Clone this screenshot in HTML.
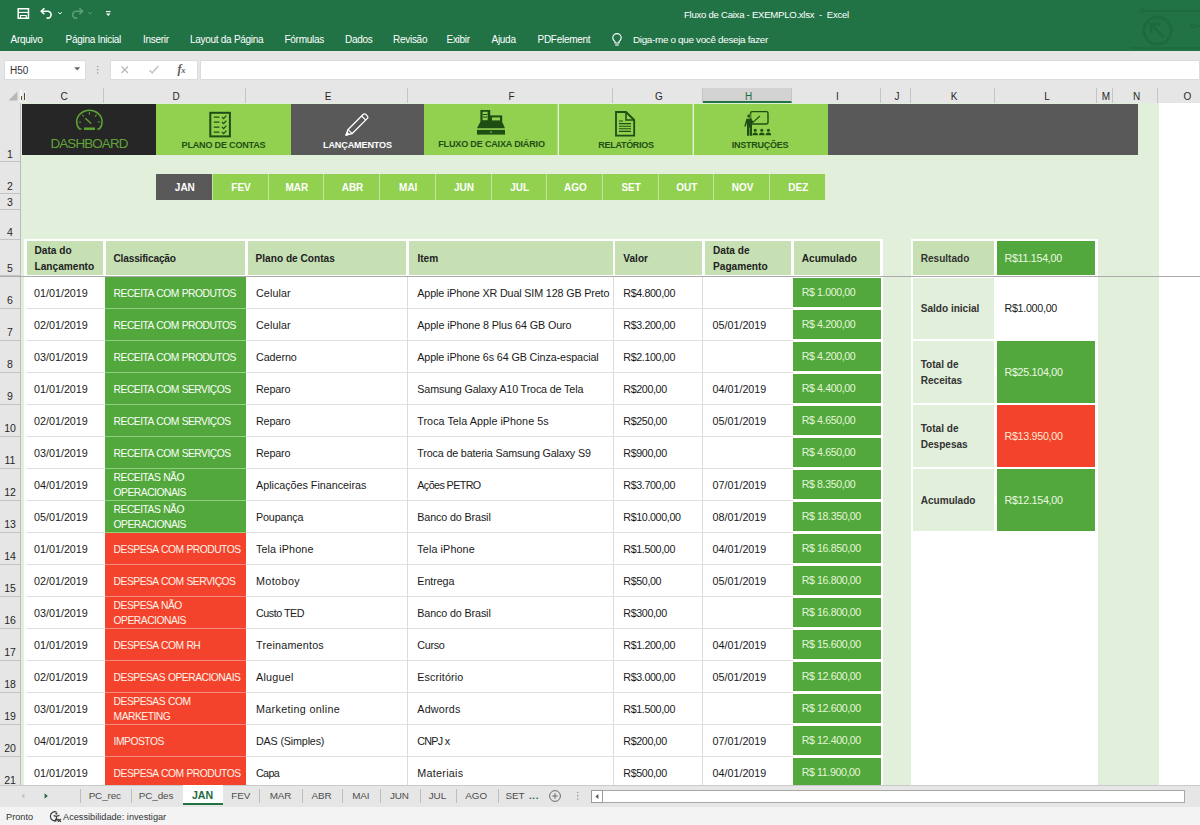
<!DOCTYPE html>
<html lang="pt-BR"><head><meta charset="utf-8"><title>Fluxo de Caixa - EXEMPLO.xlsx - Excel</title>
<style>
*{box-sizing:border-box;margin:0;padding:0}
html,body{width:1200px;height:825px;overflow:hidden;background:#fff}
body{font-family:"Liberation Sans",sans-serif;position:relative;color:#1a1a1a}
.a{position:absolute}
.t{position:absolute;white-space:nowrap;line-height:1}
#title{left:0;top:0;width:1200px;height:51px;background:#217346}
#title .m{position:absolute;top:34px;color:#fff;font-size:10px;letter-spacing:-.28px;line-height:11px;white-space:nowrap}
#fbar{left:0;top:51px;width:1200px;height:37px;background:#e6e6e6}
#fbar .w{position:absolute;top:8.5px;height:20px;background:#fff;border:1px solid #dcdcdc}
#chdr{left:0;top:88px;width:1200px;height:15px;background:#e6e6e6}
#chdr .c{position:absolute;top:0;height:15px;text-align:center;padding-left:3px;font-size:10px;line-height:17px;color:#262626;border-right:1px solid #c4c4c4}
#rhdr{left:0;top:103px;width:21px;height:682px;background:#e6e6e6;border-right:1px solid #bcbcbc;overflow:hidden}
#rhdr .r{position:absolute;left:0;width:20px;text-align:center;font-size:10.5px;color:#262626;border-bottom:1px solid #c4c4c4}
#rhdr .r span{position:absolute;left:0;width:20px;bottom:1.6px;line-height:1}
#sheet{left:21px;top:103px;width:1179px;height:682px;background:#fff;overflow:hidden;padding:0}
#sheet>.o{position:absolute;left:1px;top:0;width:1178px;height:682px}
.ban{position:absolute;top:1px;height:51px}
.ban .l{position:absolute;left:0;width:100%;text-align:center;font-weight:700;white-space:nowrap;line-height:1}
.mt{position:absolute;top:71px;height:26px;width:56px;background:#92d050;color:#fff;font-weight:700;font-size:10px;text-align:center;line-height:27px;padding-left:1.6px;border-left:1px solid #c2e59c}
.hc{position:absolute;top:137.7px;height:34px;background:#c6e0b4;font-weight:700;font-size:10.15px;line-height:16px;color:#222;padding-left:8px;padding-top:3.4px;display:flex;align-items:center}
.row{position:absolute;left:4px;width:856px;height:32px}
.row .c{position:absolute;top:0;height:32px;font-size:10.75px;line-height:33px;white-space:nowrap;color:#1a1a1a;border-bottom:1px solid #e0e0e0}
.row .k{color:#fbfff8;font-size:10.3px;letter-spacing:-.5px;word-spacing:.5px;border-bottom:1px solid #8fcf7a;display:flex;align-items:center;line-height:15.4px;padding-left:8.6px;padding-top:3px}
.row .n{font-size:10.7px;letter-spacing:-.36px}
.row .i{font-size:10.75px}
.row .ac{position:absolute;left:766.5px;top:1.4px;width:88px;height:28.7px;background:#52a83c;color:#e4f6d8;font-size:10.6px;letter-spacing:-.37px;line-height:29.6px;padding-left:9.2px;white-space:nowrap}
.pl{position:absolute;left:890.7px;width:81.2px;background:#e2efda;font-weight:700;font-size:10.07px;line-height:16px;color:#333;padding-left:8px;padding-top:3.4px;display:flex;align-items:center}
.pv{position:absolute;left:974.5px;width:98.5px;font-size:10.7px;letter-spacing:-.28px;color:#ecf9e4;padding-top:1px;padding-left:8px;display:flex;align-items:center;white-space:nowrap}
#tabs{left:0;top:785px;width:1200px;height:22px;background:#e6e6e6;border-top:1px solid #c9c9c9}
#tabs .s{position:absolute;top:-1px;font-size:9.9px;letter-spacing:-.1px;line-height:21px;color:#4d4d4d;white-space:nowrap;transform:translateX(-50%)}
#tabs .v{position:absolute;top:3px;width:1px;height:14px;background:#bdbdbd}
#status{left:0;top:807px;width:1200px;height:18px;background:#f3f3f3}
#status .s{position:absolute;top:0px;font-size:9.2px;line-height:21px;color:#333;white-space:nowrap}
</style></head>
<body>
<div id="title" class="a">
<svg class="a" style="left:1120px;top:0" width="80" height="51" viewBox="1120 0 80 51" fill="none" stroke="#1d6a40" stroke-width="2.4">
<circle cx="1157.5" cy="30.6" r="13.6" stroke-width="2.8"/><path d="M1164 38 L1152 25 M1151 33 V24 H1160" stroke-width="3"/>
<path d="M1144 11 H1200" stroke-width="1.6"/><circle cx="1142" cy="11" r="2" stroke-width="1.4"/>
<circle cx="1193" cy="26" r="2" stroke-width="1.4"/><path d="M1195 26 H1200" stroke-width="1.4"/>
<path d="M1131 48 H1200" stroke-width="1.4"/></svg>
<svg class="a" style="left:0;top:0" width="130" height="28" viewBox="0 0 130 28" fill="none" stroke="#fff" stroke-width="1.3">
<path d="M18.2 8.7 H28.5 V18.3 H18.2 Z" stroke-width="1.5"/><path d="M18.4 12.4 H28.3" stroke-width="1.1"/><path d="M20.5 18.6 V15.5 H26.3 V18.6" stroke-width="1.1"/>
<path d="M41.6 11.3 H47.7 A3.4 3.4 0 0 1 47.7 18.1 H46.6" stroke-width="1.6"/><path d="M44.4 8.3 L41.3 11.3 L44.4 14.3" stroke-width="1.6"/>
<path d="M58.2 12.3 L60 14 L61.8 12.3" stroke-width="1"/>
<g stroke="#5f9e7b"><path d="M82.2 11.3 H76.1 A3.4 3.4 0 0 0 76.1 18.1 H77.2" stroke-width="1.6"/><path d="M79.4 8.3 L82.5 11.3 L79.4 14.3" stroke-width="1.6"/>
<path d="M88.2 12.3 L90 14 L91.8 12.3" stroke-width="1"/></g>
<path d="M106 11.6 H110.6" stroke-width="1.1"/><path d="M106 13.6 H110.6 L108.3 16 Z" fill="#fff" stroke="none"/>
</svg>
<div class="t" style="left:684px;top:9.4px;color:#fff;font-size:9.6px;letter-spacing:-.27px;line-height:11px;white-space:pre">Fluxo de Caixa - EXEMPLO.xlsx  -  Excel</div>
<div class="m" style="left:10.5px">Arquivo</div><div class="m" style="left:65.5px">Página Inicial</div><div class="m" style="left:143px">Inserir</div><div class="m" style="left:190px">Layout da Página</div><div class="m" style="left:284.5px">Fórmulas</div><div class="m" style="left:345px">Dados</div><div class="m" style="left:393px">Revisão</div><div class="m" style="left:446.5px">Exibir</div><div class="m" style="left:491.5px">Ajuda</div><div class="m" style="left:537.5px">PDFelement</div><div class="m" style="left:633px;font-size:9.9px;letter-spacing:-.32px">Diga-me o que você deseja fazer</div>
<svg class="a" style="left:610.3px;top:31.8px" width="14" height="16" viewBox="0 0 14 16" fill="none" stroke="#fff" stroke-width="1.15"><path d="M5 11 V9.6 C3.4 8.4 2.8 7 2.8 5.8 A4.2 4.2 0 0 1 11.2 5.8 C11.2 7 10.6 8.4 9 9.6 V11 Z"/><path d="M5.2 13 H8.8"/></svg>
</div>
<div id="fbar" class="a">
<div class="w" style="left:4px;width:81.5px"></div><div class="t" style="left:10px;top:14.5px;font-size:10px;color:#333">H50</div>
<svg class="a" style="left:73px;top:15px" width="9" height="6" viewBox="0 0 9 6"><path d="M1.2 1.2 H7.2 L4.2 4.4 Z" fill="#666"/></svg>
<svg class="a" style="left:96px;top:14px" width="4" height="10" viewBox="0 0 4 10" fill="#8a8a8a"><circle cx="1.7" cy="1.6" r=".7"/><circle cx="1.7" cy="4.8" r=".7"/><circle cx="1.7" cy="8" r=".7"/></svg>
<div class="w" style="left:109.5px;width:88.3px"></div>
<svg class="a" style="left:110px;top:9px" width="88" height="19" viewBox="0 0 88 19" fill="none" stroke="#b5b5b5" stroke-width="1.1"><path d="M11.5 6.5 L18 13 M18 6.5 L11.5 13"/><path d="M39.5 10.3 L42.2 13 L48.3 6" stroke-width="1.5" stroke="#c2c2c2"/></svg>
<div class="t" style="left:177.5px;top:12px;font-family:'Liberation Serif',serif;font-style:italic;font-weight:700;font-size:12px;color:#5a5a5a;letter-spacing:-0.2px">f<span style="font-size:8.5px">x</span></div>
<div class="w" style="left:200px;width:1000px"></div>
</div>
<div id="chdr" class="a">
<svg class="a" style="left:8px;top:3px" width="10" height="10" viewBox="0 0 10 10"><path d="M9.4 .6 V9.4 H.6 Z" fill="#b7b7b7"/></svg>
<div class="a" style="left:20px;top:2px;width:2px;height:13px;background:#f4f4f4"></div><div class="a" style="left:25px;top:2px;width:1px;height:13px;background:#f6f1ec"></div><div class="a" style="left:24px;top:5px;width:1px;height:7px;background:#5a4632"></div><div class="a" style="left:21px;top:8px;width:1px;height:4px;background:#4f5a30"></div>
<div class="c" style="left:22px;width:82px">C</div><div class="c" style="left:104px;width:142px">D</div><div class="c" style="left:246px;width:162px">E</div><div class="c" style="left:408px;width:205px">F</div><div class="c" style="left:613px;width:90px">G</div><div class="c" style="left:703px;width:89px;background:#d3d3d3;color:#1e6b41;border-bottom:2px solid #217346">H</div><div class="c" style="left:792px;width:89px">I</div><div class="c" style="left:881px;width:30px">J</div><div class="c" style="left:911px;width:84px">K</div><div class="c" style="left:995px;width:102px">L</div><div class="c" style="left:1097px;width:16px">M</div><div class="c" style="left:1113px;width:45px">N</div><div class="c" style="left:1158px;width:57px">O</div>
</div>
<div id="rhdr" class="a">
<div class="r" style="top:0px;height:59px"><span>1</span></div><div class="r" style="top:59px;height:32px"><span>2</span></div><div class="r" style="top:91px;height:16px"><span>3</span></div><div class="r" style="top:107px;height:30px"><span>4</span></div><div class="r" style="top:137px;height:36px"><span>5</span></div><div class="r" style="top:174px;height:32px"><span style="bottom:2.9px">6</span></div><div class="r" style="top:206px;height:32px"><span style="bottom:2.9px">7</span></div><div class="r" style="top:238px;height:32px"><span style="bottom:2.9px">8</span></div><div class="r" style="top:270px;height:32px"><span style="bottom:2.9px">9</span></div><div class="r" style="top:302px;height:32px"><span style="bottom:2.9px">10</span></div><div class="r" style="top:334px;height:32px"><span style="bottom:2.9px">11</span></div><div class="r" style="top:366px;height:32px"><span style="bottom:2.9px">12</span></div><div class="r" style="top:398px;height:32px"><span style="bottom:2.9px">13</span></div><div class="r" style="top:430px;height:32px"><span style="bottom:2.9px">14</span></div><div class="r" style="top:462px;height:32px"><span style="bottom:2.9px">15</span></div><div class="r" style="top:494px;height:32px"><span style="bottom:2.9px">16</span></div><div class="r" style="top:526px;height:32px"><span style="bottom:2.9px">17</span></div><div class="r" style="top:558px;height:32px"><span style="bottom:2.9px">18</span></div><div class="r" style="top:590px;height:32px"><span style="bottom:2.9px">19</span></div><div class="r" style="top:622px;height:32px"><span style="bottom:2.9px">20</span></div><div class="r" style="top:654px;height:32px"><span style="bottom:2.9px">21</span></div>
</div>
<div id="sheet" class="a"><div class="a" style="left:0;top:0;width:2px;height:682px;background:#e2efda"></div><div class="o">
<div class="a" style="left:0;top:0;width:1137px;height:682px;background:#e2efda"></div>
<div class="a" style="left:1.7px;top:135.5px;width:859.3px;height:547px;background:#fff"></div>
<div class="a" style="left:888.6px;top:135.5px;width:187.4px;height:547px;background:#fff"></div>
<div class="ban" style="left:806px;width:310px;background:#595959"></div>
<div class="ban" style="left:0;width:134px;background:#262626"><svg class="a" style="left:52px;top:3px" width="32" height="24" viewBox="74 107 32 24" fill="none" stroke="#5da433" stroke-width="1.5" stroke-linecap="round">
<path d="M81 129.1 H79.5 A12.7 11.6 0 1 1 99.3 129.1 H97.8"/>
<path d="M84 128.7 H95" stroke-width="2.5" stroke-linecap="butt"/>
<path d="M90.8 123.3 L85.6 118.4" stroke-width="1.4"/>
<path d="M89.4 112.4 V114.2 M82.4 115 L83.5 116.2 M96.4 115 L95.3 116.2 M79.2 122 H80.6 M99.6 122 H98.2" stroke-width="1.1"/></svg><div class="l" style="top:32.8px;font-weight:400;font-size:13.4px;letter-spacing:-0.85px;color:#62a338">DASHBOARD</div></div>
<div class="ban" style="left:134px;width:135px;background:#92d050"><svg class="a" style="left:50px;top:5px" width="30" height="30" viewBox="206 109 30 30" fill="none" stroke="#1f4e14" stroke-width="1.3">
<rect x="210.3" y="112.8" width="19.6" height="23.6" stroke-width="2"/>
<path d="M213.8 117.2 H219.4 M213.8 122.2 H219.4 M213.8 127.2 H219.4 M213.8 132.2 H219.4"/>
<path d="M222 117 L223.6 118.6 L226.4 115.6 M222 122 L223.6 123.6 L226.4 120.6 M222 127 L223.6 128.6 L226.4 125.6 M222 132 L223.6 133.6 L226.4 130.6"/></svg><div class="l" style="top:36.8px;font-size:9.1px;letter-spacing:-.22px;color:#1f4e14">PLANO DE CONTAS</div></div>
<div class="ban" style="left:269px;width:133px;background:#595959"><svg class="a" style="left:50px;top:5px" width="32" height="30" viewBox="340 109 32 30" fill="none" stroke="#fff" stroke-width="1.2" stroke-linejoin="round">
<path d="M345 135.2 L346.9 129.7 L362.3 114.3 A1.6 1.6 0 0 1 364.6 114.3 L366.4 116.1 A1.6 1.6 0 0 1 366.4 118.4 L351 133.7 Z" stroke-width="1.3"/>
<path d="M347 129.6 L351.2 133.6 M360.6 116 L364.8 120.2"/><path d="M345 135.2 L346 132.4 L348 134.3 Z" fill="#fff"/></svg><div class="l" style="top:36.8px;font-size:9.1px;letter-spacing:-.15px;color:#fff">LANÇAMENTOS</div></div>
<div class="ban" style="left:402px;width:134px;background:#92d050;border-right:1px solid #b2df85"><svg class="a" style="left:50px;top:4px" width="34" height="30" viewBox="474 108 34 30" fill="#1f4e14" stroke="none">
<rect x="480.4" y="110" width="9.8" height="12"/><rect x="482.6" y="111.8" width="5" height="8.4" fill="#92d050"/><rect x="483" y="114" width="4.2" height="1" /><rect x="483" y="116.6" width="4.2" height="1"/>
<rect x="489" y="115.4" width="13.2" height="7"/><rect x="492" y="117.4" width="8" height="3" fill="#92d050"/>
<path d="M480.2 122 H502.2 L505 128.3 H477 Z"/>
<rect x="477" y="129.9" width="28" height="4.7"/><rect x="490.3" y="131.4" width="1.4" height="1.4" fill="#92d050"/></svg><div class="l" style="top:35.8px;font-size:9.1px;letter-spacing:-.2px;padding-left:2px;color:#1f4e14">FLUXO DE CAIXA DIÁRIO</div></div>
<div class="ban" style="left:537px;width:134px;background:#92d050;border-right:1px solid #b2df85"><svg class="a" style="left:52px;top:4px" width="30" height="32" viewBox="611 108 30 32" fill="none" stroke="#1f4e14" stroke-width="1.8">
<path d="M616 112 H626 L634.2 120 V135.6 H616 Z" stroke-linejoin="miter"/><path d="M626 112 V120 H634.2" stroke-width="1.5"/>
<path d="M619 121 H623 M619 123.6 H631 M619 126.2 H631 M619 128.8 H631 M619 131.4 H631" stroke-width="1.1"/></svg><div class="l" style="top:37px;font-size:9px;letter-spacing:-.3px;padding-left:1px;color:#1f4e14">RELATÓRIOS</div></div>
<div class="ban" style="left:672px;width:134px;background:#92d050"><svg class="a" style="left:48px;top:4px" width="34" height="32" viewBox="742 108 34 32" fill="#1f4e14" stroke="none">
<rect x="750.6" y="111.6" width="17.4" height="12.4" rx="1.4" fill="none" stroke="#1f4e14" stroke-width="1.4"/>
<circle cx="749" cy="116" r="2" stroke="#92d050" stroke-width=".7"/>
<path d="M746.4 118.8 H751.2 L753.4 121.8 L752.6 123.2 L752 122.8 V135.8 H749.9 V127.6 H749.3 V135.8 H747 V122.6 L745.6 126.8 L744.3 126.2 Z"/>
<path d="M752.6 122.6 L760 116" stroke="#1f4e14" stroke-width="1.2"/>
<circle cx="755.2" cy="130.2" r="1.5"/><path d="M752.4 135.2 A2.8 2.6 0 0 1 758 135.2 Z"/>
<circle cx="761.8" cy="130.2" r="1.5"/><path d="M759 135.2 A2.8 2.6 0 0 1 764.6 135.2 Z"/>
<circle cx="768.4" cy="130.2" r="1.5"/><path d="M765.6 135.2 A2.8 2.6 0 0 1 771.2 135.2 Z"/></svg><div class="l" style="top:36.5px;font-size:9px;letter-spacing:-.25px;padding-right:2px;color:#1f4e14">INSTRUÇÕES</div></div>
<div class="mt" style="left:134.20px;width:55.72px;background:#595959;border-left:none">JAN</div><div class="mt" style="left:189.92px;width:55.72px">FEV</div><div class="mt" style="left:245.64px;width:55.72px">MAR</div><div class="mt" style="left:301.36px;width:55.72px">ABR</div><div class="mt" style="left:357.08px;width:55.72px">MAI</div><div class="mt" style="left:412.80px;width:55.72px">JUN</div><div class="mt" style="left:468.52px;width:55.72px">JUL</div><div class="mt" style="left:524.24px;width:55.72px">AGO</div><div class="mt" style="left:579.96px;width:55.72px">SET</div><div class="mt" style="left:635.68px;width:55.72px">OUT</div><div class="mt" style="left:691.40px;width:55.72px">NOV</div><div class="mt" style="left:747.12px;width:55.72px">DEZ</div>
<div class="hc" style="left:4.5px;width:76.3px">Data do<br>Lançamento</div><div class="hc" style="left:83.5px;width:139.8px;letter-spacing:-.19px">Classificação</div><div class="hc" style="left:225.5px;width:158.8px">Plano de Contas</div><div class="hc" style="left:387.4px;width:203.2px">Item</div><div class="hc" style="left:593.3px;width:86.7px">Valor</div><div class="hc" style="left:683px;width:86.2px">Data de<br>Pagamento</div><div class="hc" style="left:771.7px;width:86.3px">Acumulado</div>
<div class="row" style="top:174px"><div class="c" style="left:0;width:78px;padding-left:8px">01/01/2019</div><div class="c k" style="left:79px;width:141px;background:#52a83c;border-bottom-color:#8fd07c">RECEITA COM PRODUTOS</div><div class="c" style="left:220px;width:162px;padding-left:10px;border-right:1px solid #dcdcdc;letter-spacing:0.09px">Celular</div><div class="c i" style="left:382px;width:206px;padding-left:9.3px;border-right:1px solid #dcdcdc;letter-spacing:-0.14px">Apple iPhone XR Dual SIM 128 GB Preto</div><div class="c n" style="left:588px;width:89px;padding-left:9.3px;border-right:1px solid #dcdcdc">R$4.800,00</div><div class="c" style="left:677px;width:90px;padding-left:9.5px"></div><div class="ac">R$ 1.000,00</div></div>
<div class="row" style="top:206px"><div class="c" style="left:0;width:78px;padding-left:8px">02/01/2019</div><div class="c k" style="left:79px;width:141px;background:#52a83c;border-bottom-color:#8fd07c">RECEITA COM PRODUTOS</div><div class="c" style="left:220px;width:162px;padding-left:10px;border-right:1px solid #dcdcdc;letter-spacing:0.09px">Celular</div><div class="c i" style="left:382px;width:206px;padding-left:9.3px;border-right:1px solid #dcdcdc;letter-spacing:-0.10px">Apple iPhone 8 Plus 64 GB Ouro</div><div class="c n" style="left:588px;width:89px;padding-left:9.3px;border-right:1px solid #dcdcdc">R$3.200,00</div><div class="c" style="left:677px;width:90px;padding-left:9.5px">05/01/2019</div><div class="ac">R$ 4.200,00</div></div>
<div class="row" style="top:238px"><div class="c" style="left:0;width:78px;padding-left:8px">03/01/2019</div><div class="c k" style="left:79px;width:141px;background:#52a83c;border-bottom-color:#8fd07c">RECEITA COM PRODUTOS</div><div class="c" style="left:220px;width:162px;padding-left:10px;border-right:1px solid #dcdcdc;letter-spacing:-0.08px">Caderno</div><div class="c i" style="left:382px;width:206px;padding-left:9.3px;border-right:1px solid #dcdcdc;letter-spacing:-0.11px">Apple iPhone 6s 64 GB Cinza-espacial</div><div class="c n" style="left:588px;width:89px;padding-left:9.3px;border-right:1px solid #dcdcdc">R$2.100,00</div><div class="c" style="left:677px;width:90px;padding-left:9.5px"></div><div class="ac">R$ 4.200,00</div></div>
<div class="row" style="top:270px"><div class="c" style="left:0;width:78px;padding-left:8px">01/01/2019</div><div class="c k" style="left:79px;width:141px;background:#52a83c;border-bottom-color:#8fd07c">RECEITA COM SERVIÇOS</div><div class="c" style="left:220px;width:162px;padding-left:10px;border-right:1px solid #dcdcdc;letter-spacing:-0.16px">Reparo</div><div class="c i" style="left:382px;width:206px;padding-left:9.3px;border-right:1px solid #dcdcdc;letter-spacing:-0.15px">Samsung Galaxy A10 Troca de Tela</div><div class="c n" style="left:588px;width:89px;padding-left:9.3px;border-right:1px solid #dcdcdc">R$200,00</div><div class="c" style="left:677px;width:90px;padding-left:9.5px">04/01/2019</div><div class="ac">R$ 4.400,00</div></div>
<div class="row" style="top:302px"><div class="c" style="left:0;width:78px;padding-left:8px">02/01/2019</div><div class="c k" style="left:79px;width:141px;background:#52a83c;border-bottom-color:#8fd07c">RECEITA COM SERVIÇOS</div><div class="c" style="left:220px;width:162px;padding-left:10px;border-right:1px solid #dcdcdc;letter-spacing:-0.16px">Reparo</div><div class="c i" style="left:382px;width:206px;padding-left:9.3px;border-right:1px solid #dcdcdc;letter-spacing:0.04px">Troca Tela Apple iPhone 5s</div><div class="c n" style="left:588px;width:89px;padding-left:9.3px;border-right:1px solid #dcdcdc">R$250,00</div><div class="c" style="left:677px;width:90px;padding-left:9.5px">05/01/2019</div><div class="ac">R$ 4.650,00</div></div>
<div class="row" style="top:334px"><div class="c" style="left:0;width:78px;padding-left:8px">03/01/2019</div><div class="c k" style="left:79px;width:141px;background:#52a83c;border-bottom-color:#8fd07c">RECEITA COM SERVIÇOS</div><div class="c" style="left:220px;width:162px;padding-left:10px;border-right:1px solid #dcdcdc;letter-spacing:-0.16px">Reparo</div><div class="c i" style="left:382px;width:206px;padding-left:9.3px;border-right:1px solid #dcdcdc;letter-spacing:-0.16px">Troca de bateria Samsung Galaxy S9</div><div class="c n" style="left:588px;width:89px;padding-left:9.3px;border-right:1px solid #dcdcdc">R$900,00</div><div class="c" style="left:677px;width:90px;padding-left:9.5px"></div><div class="ac">R$ 4.650,00</div></div>
<div class="row" style="top:366px"><div class="c" style="left:0;width:78px;padding-left:8px">04/01/2019</div><div class="c k" style="left:79px;width:141px;background:#52a83c;border-bottom-color:#8fd07c;padding-top:1.6px">RECEITAS NÃO<br>OPERACIONAIS</div><div class="c" style="left:220px;width:162px;padding-left:10px;border-right:1px solid #dcdcdc;letter-spacing:-0.01px">Aplicações Financeiras</div><div class="c i" style="left:382px;width:206px;padding-left:9.3px;border-right:1px solid #dcdcdc;letter-spacing:-0.60px">Ações PETRO</div><div class="c n" style="left:588px;width:89px;padding-left:9.3px;border-right:1px solid #dcdcdc">R$3.700,00</div><div class="c" style="left:677px;width:90px;padding-left:9.5px">07/01/2019</div><div class="ac">R$ 8.350,00</div></div>
<div class="row" style="top:398px"><div class="c" style="left:0;width:78px;padding-left:8px">05/01/2019</div><div class="c k" style="left:79px;width:141px;background:#52a83c;border-bottom-color:#8fd07c;padding-top:1.6px">RECEITAS NÃO<br>OPERACIONAIS</div><div class="c" style="left:220px;width:162px;padding-left:10px;border-right:1px solid #dcdcdc;letter-spacing:-0.14px">Poupança</div><div class="c i" style="left:382px;width:206px;padding-left:9.3px;border-right:1px solid #dcdcdc;letter-spacing:-0.13px">Banco do Brasil</div><div class="c n" style="left:588px;width:89px;padding-left:9.3px;border-right:1px solid #dcdcdc">R$10.000,00</div><div class="c" style="left:677px;width:90px;padding-left:9.5px">08/01/2019</div><div class="ac">R$ 18.350,00</div></div>
<div class="row" style="top:430px"><div class="c" style="left:0;width:78px;padding-left:8px">01/01/2019</div><div class="c k" style="left:79px;width:141px;background:#f4432c;border-bottom-color:#f98d7e;color:#fff3ea">DESPESA COM PRODUTOS</div><div class="c" style="left:220px;width:162px;padding-left:10px;border-right:1px solid #dcdcdc;letter-spacing:0.12px">Tela iPhone</div><div class="c i" style="left:382px;width:206px;padding-left:9.3px;border-right:1px solid #dcdcdc;letter-spacing:0.12px">Tela iPhone</div><div class="c n" style="left:588px;width:89px;padding-left:9.3px;border-right:1px solid #dcdcdc">R$1.500,00</div><div class="c" style="left:677px;width:90px;padding-left:9.5px">04/01/2019</div><div class="ac">R$ 16.850,00</div></div>
<div class="row" style="top:462px"><div class="c" style="left:0;width:78px;padding-left:8px">02/01/2019</div><div class="c k" style="left:79px;width:141px;background:#f4432c;border-bottom-color:#f98d7e;color:#fff3ea">DESPESA COM SERVIÇOS</div><div class="c" style="left:220px;width:162px;padding-left:10px;border-right:1px solid #dcdcdc;letter-spacing:0.40px">Motoboy</div><div class="c i" style="left:382px;width:206px;padding-left:9.3px;border-right:1px solid #dcdcdc;letter-spacing:-0.09px">Entrega</div><div class="c n" style="left:588px;width:89px;padding-left:9.3px;border-right:1px solid #dcdcdc">R$50,00</div><div class="c" style="left:677px;width:90px;padding-left:9.5px">05/01/2019</div><div class="ac">R$ 16.800,00</div></div>
<div class="row" style="top:494px"><div class="c" style="left:0;width:78px;padding-left:8px">03/01/2019</div><div class="c k" style="left:79px;width:141px;background:#f4432c;border-bottom-color:#f98d7e;padding-top:1.6px;color:#fff3ea">DESPESA NÃO<br>OPERACIONAIS</div><div class="c" style="left:220px;width:162px;padding-left:10px;border-right:1px solid #dcdcdc;letter-spacing:-0.49px">Custo TED</div><div class="c i" style="left:382px;width:206px;padding-left:9.3px;border-right:1px solid #dcdcdc;letter-spacing:-0.13px">Banco do Brasil</div><div class="c n" style="left:588px;width:89px;padding-left:9.3px;border-right:1px solid #dcdcdc">R$300,00</div><div class="c" style="left:677px;width:90px;padding-left:9.5px"></div><div class="ac">R$ 16.800,00</div></div>
<div class="row" style="top:526px"><div class="c" style="left:0;width:78px;padding-left:8px">01/01/2019</div><div class="c k" style="left:79px;width:141px;background:#f4432c;border-bottom-color:#f98d7e;color:#fff3ea">DESPESA COM RH</div><div class="c" style="left:220px;width:162px;padding-left:10px;border-right:1px solid #dcdcdc;letter-spacing:0.22px">Treinamentos</div><div class="c i" style="left:382px;width:206px;padding-left:9.3px;border-right:1px solid #dcdcdc;letter-spacing:-0.28px">Curso</div><div class="c n" style="left:588px;width:89px;padding-left:9.3px;border-right:1px solid #dcdcdc">R$1.200,00</div><div class="c" style="left:677px;width:90px;padding-left:9.5px">04/01/2019</div><div class="ac">R$ 15.600,00</div></div>
<div class="row" style="top:558px"><div class="c" style="left:0;width:78px;padding-left:8px">02/01/2019</div><div class="c k" style="left:79px;width:141px;background:#f4432c;border-bottom-color:#f98d7e;color:#fff3ea">DESPESAS OPERACIONAIS</div><div class="c" style="left:220px;width:162px;padding-left:10px;border-right:1px solid #dcdcdc;letter-spacing:0.26px">Aluguel</div><div class="c i" style="left:382px;width:206px;padding-left:9.3px;border-right:1px solid #dcdcdc;letter-spacing:0.12px">Escritório</div><div class="c n" style="left:588px;width:89px;padding-left:9.3px;border-right:1px solid #dcdcdc">R$3.000,00</div><div class="c" style="left:677px;width:90px;padding-left:9.5px">05/01/2019</div><div class="ac">R$ 12.600,00</div></div>
<div class="row" style="top:590px"><div class="c" style="left:0;width:78px;padding-left:8px">03/01/2019</div><div class="c k" style="left:79px;width:141px;background:#f4432c;border-bottom-color:#f98d7e;padding-top:1.6px;color:#fff3ea">DESPESAS COM<br>MARKETING</div><div class="c" style="left:220px;width:162px;padding-left:10px;border-right:1px solid #dcdcdc;letter-spacing:0.32px">Marketing online</div><div class="c i" style="left:382px;width:206px;padding-left:9.3px;border-right:1px solid #dcdcdc;letter-spacing:0.21px">Adwords</div><div class="c n" style="left:588px;width:89px;padding-left:9.3px;border-right:1px solid #dcdcdc">R$1.500,00</div><div class="c" style="left:677px;width:90px;padding-left:9.5px"></div><div class="ac">R$ 12.600,00</div></div>
<div class="row" style="top:622px"><div class="c" style="left:0;width:78px;padding-left:8px">04/01/2019</div><div class="c k" style="left:79px;width:141px;background:#f4432c;border-bottom-color:#f98d7e;color:#fff3ea">IMPOSTOS</div><div class="c" style="left:220px;width:162px;padding-left:10px;border-right:1px solid #dcdcdc;letter-spacing:-0.17px">DAS (Simples)</div><div class="c i" style="left:382px;width:206px;padding-left:9.3px;border-right:1px solid #dcdcdc;letter-spacing:-0.74px">CNPJ x</div><div class="c n" style="left:588px;width:89px;padding-left:9.3px;border-right:1px solid #dcdcdc">R$200,00</div><div class="c" style="left:677px;width:90px;padding-left:9.5px">07/01/2019</div><div class="ac">R$ 12.400,00</div></div>
<div class="row" style="top:654px"><div class="c" style="left:0;width:78px;padding-left:8px">01/01/2019</div><div class="c k" style="left:79px;width:141px;background:#f4432c;border-bottom-color:#f98d7e;color:#fff3ea">DESPESA COM PRODUTOS</div><div class="c" style="left:220px;width:162px;padding-left:10px;border-right:1px solid #dcdcdc;letter-spacing:-0.68px">Capa</div><div class="c i" style="left:382px;width:206px;padding-left:9.3px;border-right:1px solid #dcdcdc;letter-spacing:0.27px">Materiais</div><div class="c n" style="left:588px;width:89px;padding-left:9.3px;border-right:1px solid #dcdcdc">R$500,00</div><div class="c" style="left:677px;width:90px;padding-left:9.5px">04/01/2019</div><div class="ac">R$ 11.900,00</div></div>
<div class="pl" style="top:137.7px;height:34px;padding-top:3px;background:#c6e0b4">Resultado</div><div class="pv" style="top:137.7px;height:34px;padding-top:1px;background:#52a83c">R$11.154,00</div>
<div class="pl" style="top:175px;height:60.6px;padding-top:1.6px">Saldo inicial</div><div class="pv" style="top:175px;height:60.6px;padding-top:0;color:#1a1a1a">R$1.000,00</div>
<div class="pl" style="top:238px;height:61.6px">Total de<br>Receitas</div><div class="pv" style="top:238px;height:61.6px;background:#52a83c">R$25.104,00</div>
<div class="pl" style="top:302px;height:61.6px">Total de<br>Despesas</div><div class="pv" style="top:302px;height:61.6px;background:#f4432c;color:#fdead4">R$13.950,00</div>
<div class="pl" style="top:366px;height:61.6px">Acumulado</div><div class="pv" style="top:366px;height:61.6px;background:#52a83c">R$12.154,00</div>
<div class="a" style="left:-1px;top:173px;width:1179px;height:1px;background:#ababab"></div>
</div></div>
<div class="a" style="left:0;top:276px;width:21px;height:1px;background:#ababab"></div>
<div id="tabs" class="a">
<svg class="a" style="left:18px;top:5px" width="36" height="10" viewBox="0 0 36 10"><path d="M6.4 2.2 V7.8 L3.4 5 Z" fill="#c4c4c4"/><path d="M26.6 2.2 V7.8 L29.8 5 Z" fill="#1e6b41"/></svg>
<div class="a" style="left:183px;top:-1px;width:40px;height:20px;background:#fff;border-bottom:2px solid #217346"></div>
<div class="v" style="left:80px"></div><div class="v" style="left:130.5px"></div><div class="v" style="left:259px"></div><div class="v" style="left:302px"></div><div class="v" style="left:341.5px"></div><div class="v" style="left:380px"></div><div class="v" style="left:419.5px"></div><div class="v" style="left:456px"></div><div class="v" style="left:497.5px"></div><div class="s" style="left:104.8px">PC_rec</div><div class="s" style="left:156px">PC_des</div><div class="s" style="left:240.7px">FEV</div><div class="s" style="left:280.5px">MAR</div><div class="s" style="left:321.5px">ABR</div><div class="s" style="left:360.8px">MAI</div><div class="s" style="left:399.4px">JUN</div><div class="s" style="left:437.4px">JUL</div><div class="s" style="left:476.2px">AGO</div><div class="s" style="left:515px">SET</div><div class="s" style="left:202.5px;color:#1e6b41;font-weight:700;font-size:10.6px">JAN</div><div class="s" style="left:534px;color:#1e6b41;font-weight:700;letter-spacing:.6px">...</div>
<svg class="a" style="left:548px;top:3px" width="14" height="14" viewBox="0 0 14 14" fill="none" stroke="#6a6a6a" stroke-width="1"><circle cx="7" cy="7" r="5.4"/><path d="M7 4.2 V9.8 M4.2 7 H9.8"/></svg>
<svg class="a" style="left:576px;top:5px" width="4" height="10" viewBox="0 0 4 10" fill="#8a8a8a"><circle cx="1.7" cy="1.6" r=".7"/><circle cx="1.7" cy="4.8" r=".7"/><circle cx="1.7" cy="8" r=".7"/></svg>
<div class="a" style="left:591px;top:4px;width:12px;height:13px;background:#fff;border:1px solid #9a9a9a"></div><svg class="a" style="left:594px;top:7px" width="6" height="7" viewBox="0 0 6 7"><path d="M4.4 1 V6 L1.4 3.5 Z" fill="#555"/></svg>
<div class="a" style="left:603px;top:4px;width:582px;height:13px;background:#fff;border:1px solid #a8a8a8;border-left:none"></div>
</div>
<div id="status" class="a">
<div class="s" style="left:6px">Pronto</div>
<svg class="a" style="left:48px;top:3px" width="14" height="13" viewBox="0 0 14 13" fill="none" stroke="#3a3a3a" stroke-width="1.15"><path d="M8.6 2 A4.6 4.6 0 1 0 8.6 10.6" /><circle cx="8.4" cy="3.6" r="1.1" fill="#444" stroke="none"/><path d="M5.6 5.6 L8.4 6.4 L11.4 5.4 M8.4 6.4 V8.4 L6.6 11.4 M8.4 8.4 L10.6 11.4"/><path d="M10.2 8.8 L13 11.8 M13 8.8 L10.2 11.8" stroke-width="1.1"/></svg>
<div class="s" style="left:63px">Acessibilidade: investigar</div>
</div>
</body></html>
